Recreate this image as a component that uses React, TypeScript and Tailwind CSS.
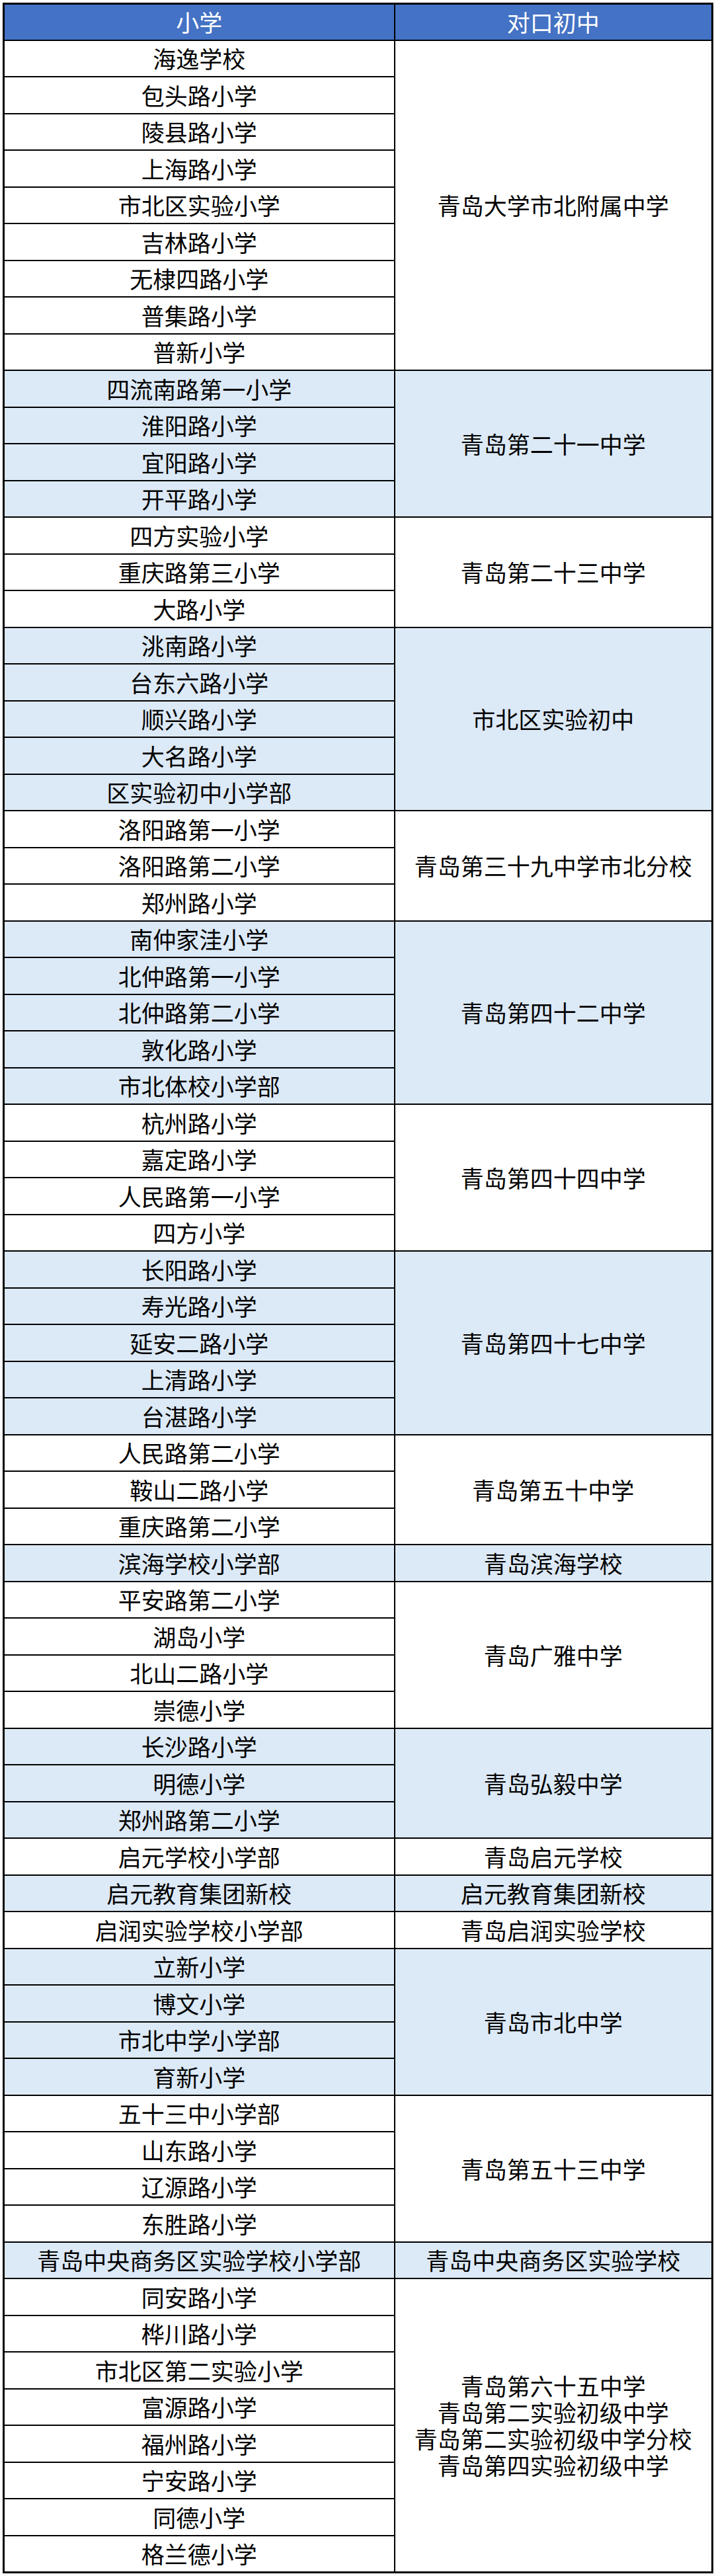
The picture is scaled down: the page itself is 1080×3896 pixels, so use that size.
type Group = { schools: string[]; target: string[]; tone: 'white' | 'blue' };

const groups: Group[] = [
  {
    schools: ['海逸学校', '包头路小学', '陵县路小学', '上海路小学', '市北区实验小学', '吉林路小学', '无棣四路小学', '普集路小学', '普新小学'],
    target: ['青岛大学市北附属中学'],
    tone: 'white',
  },
  { schools: ['四流南路第一小学', '淮阳路小学', '宜阳路小学', '开平路小学'], target: ['青岛第二十一中学'], tone: 'blue' },
  { schools: ['四方实验小学', '重庆路第三小学', '大路小学'], target: ['青岛第二十三中学'], tone: 'white' },
  { schools: ['洮南路小学', '台东六路小学', '顺兴路小学', '大名路小学', '区实验初中小学部'], target: ['市北区实验初中'], tone: 'blue' },
  { schools: ['洛阳路第一小学', '洛阳路第二小学', '郑州路小学'], target: ['青岛第三十九中学市北分校'], tone: 'white' },
  { schools: ['南仲家洼小学', '北仲路第一小学', '北仲路第二小学', '敦化路小学', '市北体校小学部'], target: ['青岛第四十二中学'], tone: 'blue' },
  { schools: ['杭州路小学', '嘉定路小学', '人民路第一小学', '四方小学'], target: ['青岛第四十四中学'], tone: 'white' },
  { schools: ['长阳路小学', '寿光路小学', '延安二路小学', '上清路小学', '台湛路小学'], target: ['青岛第四十七中学'], tone: 'blue' },
  { schools: ['人民路第二小学', '鞍山二路小学', '重庆路第二小学'], target: ['青岛第五十中学'], tone: 'white' },
  { schools: ['滨海学校小学部'], target: ['青岛滨海学校'], tone: 'blue' },
  { schools: ['平安路第二小学', '湖岛小学', '北山二路小学', '崇德小学'], target: ['青岛广雅中学'], tone: 'white' },
  { schools: ['长沙路小学', '明德小学', '郑州路第二小学'], target: ['青岛弘毅中学'], tone: 'blue' },
  { schools: ['启元学校小学部'], target: ['青岛启元学校'], tone: 'white' },
  { schools: ['启元教育集团新校'], target: ['启元教育集团新校'], tone: 'blue' },
  { schools: ['启润实验学校小学部'], target: ['青岛启润实验学校'], tone: 'white' },
  { schools: ['立新小学', '博文小学', '市北中学小学部', '育新小学'], target: ['青岛市北中学'], tone: 'blue' },
  { schools: ['五十三中小学部', '山东路小学', '辽源路小学', '东胜路小学'], target: ['青岛第五十三中学'], tone: 'white' },
  { schools: ['青岛中央商务区实验学校小学部'], target: ['青岛中央商务区实验学校'], tone: 'blue' },
  {
    schools: ['同安路小学', '桦川路小学', '市北区第二实验小学', '富源路小学', '福州路小学', '宁安路小学', '同德小学', '格兰德小学'],
    target: ['青岛第六十五中学', '青岛第二实验初级中学', '青岛第二实验初级中学分校', '青岛第四实验初级中学'],
    tone: 'white',
  },
];

export default function App() {
  return (
    <div
      className="min-h-[3896px] w-[1080px] bg-white pl-[4px] pt-[4px] text-black"
      style={{ fontFamily: '"Noto Sans CJK SC", "Noto Sans", sans-serif' }}
    >
      <table className="w-[1072px] table-fixed border-collapse border-[3px] border-black text-center text-[35px] leading-[40px]">
        <colgroup>
          <col className="w-[591px]" />
          <col className="w-[481px]" />
        </colgroup>
        <thead>
          <tr className="h-[55px] bg-[#4472c4] text-white">
            <th className="border-[2.5px] border-black p-0 font-normal">小学</th>
            <th className="border-[2.5px] border-black p-0 font-normal">对口初中</th>
          </tr>
        </thead>
        <tbody>
          {groups.map((group) =>
            group.schools.map((school, i) => (
              <tr key={school + i} className={`h-[55.5px] ${group.tone === 'blue' ? 'bg-[#dce9f6]' : 'bg-white'}`}>
                <td className="border-[2.5px] border-black p-0 whitespace-nowrap">{school}</td>
                {i === 0 ? (
                  <td rowSpan={group.schools.length} className="border-[2.5px] border-black p-0 whitespace-nowrap">
                    {group.target.map((line) => (
                      <div key={line}>{line}</div>
                    ))}
                  </td>
                ) : null}
              </tr>
            )),
          )}
        </tbody>
      </table>
    </div>
  );
}
